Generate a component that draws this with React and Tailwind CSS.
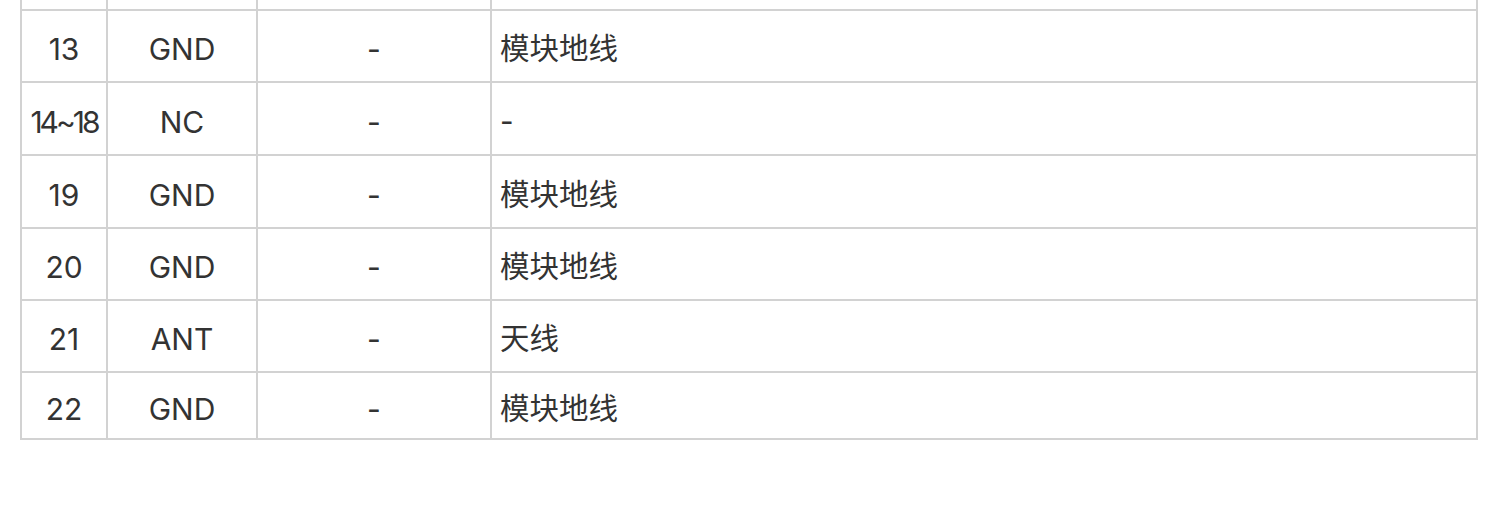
import React from "react";

const rows = [
  ["13", "GND", "-", "模块地线", 72],
  ["14~18", "NC", "-", "-", 73],
  ["19", "GND", "-", "模块地线", 73],
  ["20", "GND", "-", "模块地线", 72],
  ["21", "ANT", "-", "天线", 72],
  ["22", "GND", "-", "模块地线", 67],
];

const cell = "border-2 border-[#d2d2d2] p-0 align-middle";

export default function App() {
  return (
    <div
      className="w-[1500px] h-[523px] bg-white text-[#333333] overflow-hidden"
      style={{ fontFamily: 'Inter, "Noto Sans CJK SC", sans-serif' }}
    >
      <table className="ml-[20px] table-fixed border-collapse w-[1458px] text-[30px] leading-none">
        <colgroup>
          <col className="w-[86px]" />
          <col className="w-[150px]" />
          <col className="w-[234px]" />
          <col />
        </colgroup>
        <tbody>
          <tr className="h-[10px]">
            <td className="border-2 border-t-0 border-[#d2d2d2] p-0"></td>
            <td className="border-2 border-t-0 border-[#d2d2d2] p-0"></td>
            <td className="border-2 border-t-0 border-[#d2d2d2] p-0"></td>
            <td className="border-2 border-t-0 border-[#d2d2d2] p-0"></td>
          </tr>
          {rows.map(([a, b, c, d, h], i) => (
            <tr key={i} style={{ height: h }}>
              <td className={`${cell} text-center`}>
                <span className={`inline-block pt-[6px] ${a.length > 2 ? "tracking-[-3px]" : ""}`}>{a}</span>
              </td>
              <td className={`${cell} text-center`}>
                <span className="inline-block pt-[6px]">{b}</span>
              </td>
              <td className={`${cell} text-center`}>
                <span className="inline-block pt-[6px]">{c}</span>
              </td>
              <td className={`${cell} text-left pl-[8px]`}>
                <span className="inline-block pt-[6px] text-[29.5px]">{d}</span>
              </td>
            </tr>
          ))}
        </tbody>
      </table>
    </div>
  );
}
